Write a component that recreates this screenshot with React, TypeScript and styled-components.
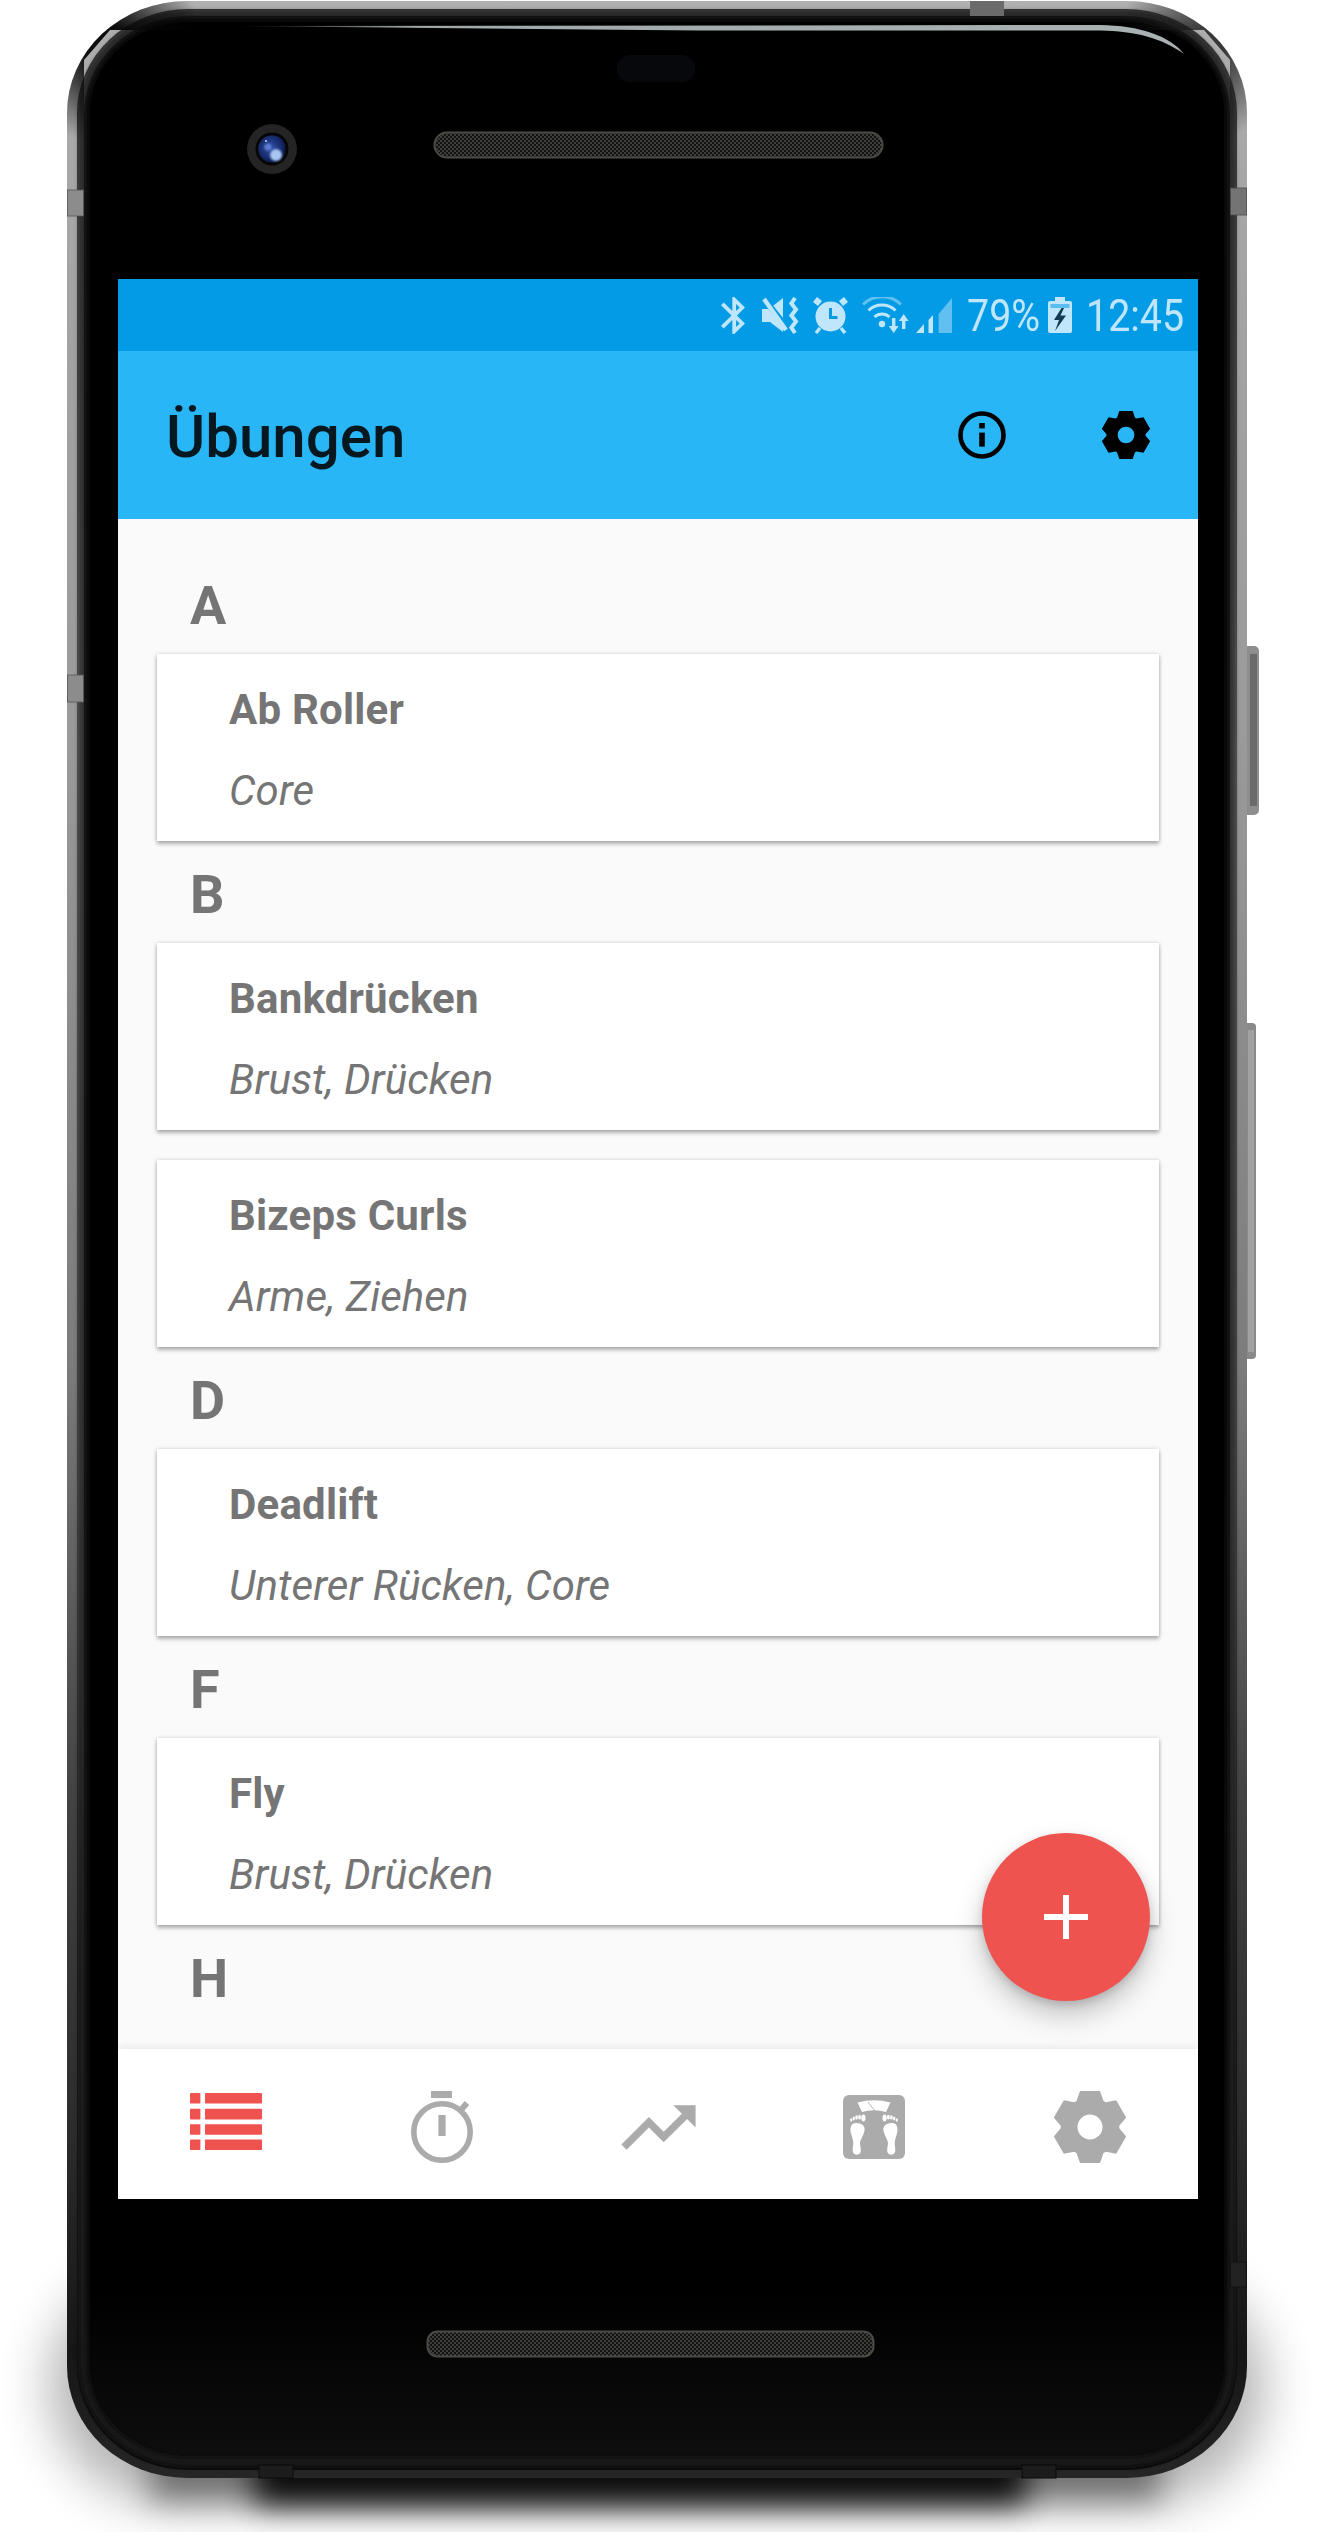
import React from 'react'
import styled, { createGlobalStyle } from 'styled-components'

const sections = [
  { letter: 'A', items: [{ name: 'Ab Roller', muscles: 'Core' }] },
  {
    letter: 'B',
    items: [
      { name: 'Bankdrücken', muscles: 'Brust, Drücken' },
      { name: 'Bizeps Curls', muscles: 'Arme, Ziehen' },
    ],
  },
  { letter: 'D', items: [{ name: 'Deadlift', muscles: 'Unterer Rücken, Core' }] },
  { letter: 'F', items: [{ name: 'Fly', muscles: 'Brust, Drücken' }] },
  { letter: 'H', items: [] },
]

// six flat teeth, one pointing straight up
const gearPath = (c: number, tip: number, root: number, tipW: number, baseW: number, hole: number) => {
  const pts: string[] = []
  for (let i = 0; i < 6; i++) {
    const a = (i * Math.PI) / 3
    const pt = (u: number, v: number) => {
      const x = c + u * Math.cos(a) + v * Math.sin(a)
      const y = c + u * Math.sin(a) - v * Math.cos(a)
      return `${x.toFixed(2)} ${y.toFixed(2)}`
    }
    pts.push(pt(-baseW, root), pt(-tipW, tip), pt(tipW, tip), pt(baseW, root))
  }
  return (
    `M${pts.join('L')}Z` +
    `M${c - hole} ${c}a${hole} ${hole} 0 1 0 ${hole * 2} 0a${hole} ${hole} 0 1 0 ${-hole * 2} 0Z`
  )
}

const GlobalStyle = createGlobalStyle`
  html, body {
    margin: 0;
    padding: 0;
    background: #fff;
  }
  * {
    box-sizing: border-box;
  }
`

const Stage = styled.div`
  width: 1330px;
  height: 2532px;
  padding-left: 67px;
  overflow: hidden;
  background: #fff;
  font-family: Roboto, 'Liberation Sans', sans-serif;
`

const Phone = styled.div`
  position: relative;
  width: 1180px;
  height: 2478px;
  padding: 279px 49px 279px 51px;
`

const Shell = styled.svg`
  position: absolute;
  left: 0;
  top: 0;
  overflow: visible;
`

const Screen = styled.div`
  position: relative;
  height: 1920px;
  display: flex;
  flex-direction: column;
  overflow: hidden;
  background: #fafafa;
`

const StatusBar = styled.div`
  flex: 0 0 72px;
  display: flex;
  align-items: center;
  justify-content: flex-end;
  padding: 0 17px 0 0;
  background: #039be5;
  color: #bfe6fb;
`

const StatusGlyph = styled.svg<{ $gap?: number }>`
  display: block;
  margin-left: ${(p) => p.$gap ?? 0}px;
  fill: #bfe6fb;
`

const StatusText = styled.span<{ $w: number; $gap: number }>`
  display: block;
  width: ${(p) => p.$w}px;
  margin-left: ${(p) => p.$gap}px;
  padding-top: 2px;
  font-size: 45px;
  line-height: 70px;
  white-space: nowrap;
  transform: scaleX(0.875);
  transform-origin: left center;
`

const AppBar = styled.header`
  flex: 0 0 168px;
  display: flex;
  align-items: center;
  padding: 0 48px;
  background: #29b6f6;
`

const Title = styled.h1`
  flex: 1;
  margin: 0;
  padding-top: 2px;
  font-size: 60px;
  font-weight: 500;
  color: rgba(0, 0, 0, 0.87);
`

const Actions = styled.div`
  display: flex;
  gap: 96px;
`

const Content = styled.main`
  flex: 1;
  min-height: 0;
  padding-top: 33px;
  overflow: hidden;
`

const SectionLetter = styled.div`
  height: 102px;
  padding: 24px 0 0 72px;
  font-size: 54px;
  line-height: 60px;
  font-weight: 700;
  color: #757575;
`

const Card = styled.article`
  height: 187px;
  margin: 0 39px 30px;
  padding: 31px 0 0 72px;
  background: #fff;
  box-shadow: 0 3px 4px rgba(0, 0, 0, 0.28), 0 0 4px rgba(0, 0, 0, 0.16);
  &:last-child {
    margin-bottom: 0;
  }
`

const CardName = styled.div`
  font-size: 42px;
  line-height: 50px;
  font-weight: 700;
  letter-spacing: 0.2px;
  color: #757575;
`

const CardMuscles = styled.div`
  margin-top: 31px;
  font-size: 42px;
  line-height: 50px;
  font-style: italic;
  letter-spacing: 0.1px;
  color: #757575;
`

const Fab = styled.button`
  position: absolute;
  right: 48px;
  bottom: 198px;
  width: 168px;
  height: 168px;
  display: flex;
  align-items: center;
  justify-content: center;
  padding: 0;
  border: 0;
  border-radius: 50%;
  background: #ef5350;
  box-shadow: 0 14px 28px rgba(0, 0, 0, 0.22), 0 4px 8px rgba(0, 0, 0, 0.14);
`

const BottomNav = styled.nav`
  position: relative;
  flex: 0 0 150px;
  display: flex;
  background: #fff;
  box-shadow: 0 -2px 8px rgba(0, 0, 0, 0.07);
`

const NavItem = styled.div<{ $raised?: boolean }>`
  flex: 1;
  display: flex;
  align-items: center;
  justify-content: center;
  padding: ${(p) => (p.$raised ? '0 0 6px' : '6px 0 0')};
`

const Gear = ({ size, color }: { size: number; color: string }) => (
  <svg width={size} height={size} viewBox="0 0 72 72">
    <path fillRule="evenodd" fill={color} d={gearPath(36, 36, 26, 10, 13.5, 12.5)} />
  </svg>
)

const InfoIcon = () => (
  <svg width="48" height="48" viewBox="0 0 48 48">
    <circle cx="24" cy="24" r="21.5" fill="none" stroke="#000" strokeWidth="4.6" />
    <rect x="21.2" y="12" width="5.6" height="5.4" />
    <rect x="21.2" y="21.6" width="5.6" height="14" />
  </svg>
)

const ListIcon = () => (
  <svg width="72" height="57" viewBox="0 0 72 57" fill="#ef5350">
    {[0, 15.8, 31.2, 46.4].map((y) => (
      <g key={y}>
        <rect x="0" y={y} width="10.4" height="10.6" rx="0.8" />
        <rect x="15" y={y} width="57" height="10.6" rx="0.8" />
      </g>
    ))}
  </svg>
)

const StopwatchIcon = () => (
  <svg width="62" height="72" viewBox="0 0 62 72">
    <rect x="20" y="0" width="21" height="7" fill="#ababab" />
    <circle cx="31" cy="41" r="28.2" fill="none" stroke="#ababab" strokeWidth="5.6" />
    <rect x="27.4" y="24" width="7.2" height="21" fill="#ababab" />
    <path d="M49 20l7-8" stroke="#ababab" strokeWidth="6" />
  </svg>
)

const TrendingIcon = () => (
  <svg width="89" height="89" viewBox="0 0 24 24" fill="#ababab">
    <path d="M16 6l2.29 2.29-4.88 4.88-4-4L2 16.59 3.41 18l6-6 4 4 6.3-6.29L22 12V6z" />
  </svg>
)

const foot =
  'M13 28C8 28 6.5 33 8 38.5C9.4 43 10.6 46 10.2 50C9.8 53 9.4 55 10 57C11 60.5 16.5 60.5 17.6 57C18.4 54 17 51 17 48C17.2 44.5 21 40 21.6 35C22 31 19 28 13 28Z'

const ScaleIcon = () => (
  <svg width="62" height="64" viewBox="0 0 62 64">
    <rect width="62" height="64" rx="6" fill="#ababab" />
    <path d="M14.5 7.5Q31 3 47.5 7.5L43 17Q31 13.6 19 17Z" fill="#fff" />
    <path d="M25 7l7 9" stroke="#ababab" strokeWidth="0.9" />
    <g fill="#fff">
      <path d={foot} />
      <path d={foot} transform="translate(62 0) scale(-1 1)" />
      {[
        [8.2, 25, 1.1, 1.8],
        [10.8, 23.4, 1.2, 2],
        [13.6, 22.4, 1.3, 2.2],
        [16.6, 22.2, 1.4, 2.4],
        [20.4, 23, 2.1, 3.4],
        [53.8, 25, 1.1, 1.8],
        [51.2, 23.4, 1.2, 2],
        [48.4, 22.4, 1.3, 2.2],
        [45.4, 22.2, 1.4, 2.4],
        [41.6, 23, 2.1, 3.4],
      ].map(([cx, cy, rx, ry]) => (
        <ellipse key={cx} cx={cx} cy={cy} rx={rx} ry={ry} />
      ))}
    </g>
  </svg>
)

const PlusIcon = () => (
  <svg width="44" height="44" viewBox="0 0 44 44" fill="#fff">
    <rect x="19" y="0" width="6" height="44" />
    <rect x="0" y="19" width="44" height="6" />
  </svg>
)

const StatusIcons = () => (
  <>
    <StatusGlyph width="24" height="37" viewBox="5 2 12.71 20" preserveAspectRatio="none">
      <path d="M17.71 7.71L12 2h-1v7.59L6.41 5 5 6.41 10.59 12 5 17.59 6.41 19 11 14.41V22h1l5.71-5.71-4.3-4.29 4.3-4.29zM13 5.83l1.88 1.88L13 9.59V5.83zm1.88 10.46L13 18.17v-3.76l1.88 1.88z" />
    </StatusGlyph>
    <StatusGlyph $gap={17} width="37" height="37" viewBox="0 0 37 37">
      <path d="M0 12H7L21 1V35L8 25H0Z" />
      <path d="M3 3L26 32" stroke="#039be5" strokeWidth="6" />
      <path d="M2 2L24 33" stroke="#bfe6fb" strokeWidth="4.4" />
      <path
        d="M33 1l-3.6 5.5 4.6 6-4.6 6 4.6 6-4.6 6 3.6 5.5"
        fill="none"
        stroke="#bfe6fb"
        strokeWidth="4"
      />
    </StatusGlyph>
    <StatusGlyph $gap={14} width="35" height="37" viewBox="0 0 35 37">
      <circle cx="17.5" cy="19.5" r="15" />
      <path d="M4 0L0 5l5 4 4-5zM31 0l4 5-5 4-4-5z" />
      <path d="M7 31l-4 5M28 31l4 5" stroke="#bfe6fb" strokeWidth="3.4" />
      <path d="M17.5 11v9.5h7" fill="none" stroke="#039be5" strokeWidth="3" />
    </StatusGlyph>
    <StatusGlyph $gap={14} width="48" height="37" viewBox="0 0 48 37">
      <circle cx="20" cy="27" r="3.2" />
      <g fill="none" stroke="#bfe6fb" strokeWidth="3">
        <path d="M12.5 20a11 11 0 0 1 15 0" />
        <path d="M6.5 13.5a19.5 19.5 0 0 1 27 0" />
        <path d="M1 7.5a27 27 0 0 1 38 0" opacity="0.5" />
      </g>
      <path d="M30 21h3.4v8h3.2L31.7 36l-4.9-7H30zM40 32V24h-3.2l4.9-7 4.9 7h-3.2v8z" />
    </StatusGlyph>
    <StatusGlyph $gap={6} width="36" height="37" viewBox="0 0 36 37">
      <path d="M0 36L8 27V36Z" />
      <path d="M12.5 23L17 18V36H12.5Z" />
      <path d="M22.6 17L36 1V36H22.6Z" opacity="0.5" />
    </StatusGlyph>
    <StatusText $w={70} $gap={15}>
      79%
    </StatusText>
    <StatusGlyph $gap={11} width="24" height="36" viewBox="0 0 24 36">
      <path d="M7 0H17V4H22Q24 4 24 6V34Q24 36 22 36H2Q0 36 0 34V6Q0 4 2 4H7Z" />
      <rect x="2.5" y="7" width="19" height="4" fill="#039be5" opacity="0.55" />
      <path d="M13.5 11L6 23H11L7 34L18 18.5H12.5L16 11Z" fill="#123c52" />
    </StatusGlyph>
    <StatusText $w={95} $gap={14}>
      12:45
    </StatusText>
  </>
)

const DeviceShell = () => (
  <Shell width="1180" height="2478" viewBox="67 0 1180 2478">
    <defs>
      <linearGradient id="band" x1="0" y1="0" x2="0" y2="1">
        <stop offset="0" stopColor="#b0b0b0" />
        <stop offset="0.08" stopColor="#a6a6a6" />
        <stop offset="0.3" stopColor="#9a9a9a" />
        <stop offset="0.55" stopColor="#7c7c7c" />
        <stop offset="0.72" stopColor="#444" />
        <stop offset="0.86" stopColor="#2c2c2c" />
        <stop offset="0.95" stopColor="#161616" />
        <stop offset="1" stopColor="#262626" />
      </linearGradient>
      <linearGradient id="innerBand" x1="0" y1="0" x2="0" y2="1">
        <stop offset="0" stopColor="#3a3a3a" />
        <stop offset="0.3" stopColor="#555" />
        <stop offset="0.6" stopColor="#444" />
        <stop offset="0.8" stopColor="#1c1c1c" />
        <stop offset="1" stopColor="#0c0c0c" />
      </linearGradient>
      <linearGradient id="face" x1="0" y1="0" x2="0" y2="1">
        <stop offset="0" stopColor="#000" />
        <stop offset="0.93" stopColor="#000" />
        <stop offset="1" stopColor="#0e0e0e" />
      </linearGradient>
      <linearGradient id="glare" x1="0" y1="0" x2="1" y2="0">
        <stop offset="0" stopColor="#9fa9aa" stopOpacity="0" />
        <stop offset="0.2" stopColor="#9fa9aa" />
        <stop offset="1" stopColor="#aab2b4" />
      </linearGradient>
      <radialGradient id="cornerL" gradientUnits="userSpaceOnUse" cx="110" cy="50" r="95">
        <stop offset="0.25" stopColor="#060606" stopOpacity="0.95" />
        <stop offset="1" stopColor="#060606" stopOpacity="0" />
      </radialGradient>
      <radialGradient id="cornerR" gradientUnits="userSpaceOnUse" cx="1204" cy="50" r="90">
        <stop offset="0.2" stopColor="#181818" stopOpacity="0.8" />
        <stop offset="1" stopColor="#181818" stopOpacity="0" />
      </radialGradient>
      <radialGradient id="lens" cx="0.45" cy="0.45" r="0.6">
        <stop offset="0" stopColor="#2f4fa8" />
        <stop offset="0.7" stopColor="#16296a" />
        <stop offset="1" stopColor="#070d24" />
      </radialGradient>
      <pattern id="mesh" width="4" height="4" patternUnits="userSpaceOnUse">
        <rect width="4" height="4" fill="#121212" />
        <rect x="0" y="0" width="2" height="2" fill="#3e3e3a" />
        <rect x="2" y="2" width="2" height="2" fill="#3e3e3a" />
      </pattern>
      <clipPath id="bodyClip">
        <rect x="67" y="1" width="1180" height="2477" rx="120" ry="112" />
      </clipPath>
      <filter id="blurBig" x="-20%" y="-60%" width="140%" height="220%">
        <feGaussianBlur stdDeviation="26" />
      </filter>
      <filter id="blurMid" x="-20%" y="-60%" width="140%" height="220%">
        <feGaussianBlur stdDeviation="15" />
      </filter>
      <filter id="blurSmall" x="-50%" y="-50%" width="200%" height="200%">
        <feGaussianBlur stdDeviation="1.2" />
      </filter>
      <filter id="blurEdge" x="-5%" y="-5%" width="110%" height="110%">
        <feGaussianBlur stdDeviation="3" />
      </filter>
    </defs>

    {/* shadow under the phone */}
    <rect x="50" y="2270" width="1214" height="232" rx="120" fill="#000" opacity="0.3" filter="url(#blurBig)" />
    <rect x="150" y="2440" width="1010" height="62" fill="#000" opacity="0.4" filter="url(#blurMid)" />
    <rect x="255" y="2420" width="770" height="84" fill="#000" opacity="0.9" filter="url(#blurMid)" />

    {/* side buttons */}
    <rect x="1240" y="646" width="19" height="169" rx="5" fill="#8e8e8e" />
    <rect x="1250" y="654" width="7" height="152" fill="#6a6a6a" />
    <rect x="1240" y="1023" width="16" height="336" rx="4" fill="#8a8a8a" />
    <rect x="1248" y="1030" width="6" height="322" fill="#a2a2a2" />

    {/* body */}
    <rect x="67" y="1" width="1180" height="2477" rx="120" ry="112" fill="url(#band)" />
    <rect x="77" y="9" width="1160" height="2461" rx="111" ry="104" fill="url(#innerBand)" />
    <rect x="84" y="16" width="1146" height="2446" rx="104" ry="98" fill="url(#face)" />
    <rect x="84" y="16" width="1146" height="2446" rx="104" ry="98" fill="none" stroke="#1c1c1c" strokeWidth="6" filter="url(#blurEdge)" />

    {/* dark corners of the frame */}
    <g clipPath="url(#bodyClip)">
      <path d="M67 170V0H240V30H110L84 60V170Z" fill="url(#cornerL)" />
      <path d="M1247 170V0H1074V30H1204L1230 60V170Z" fill="url(#cornerR)" />
    </g>

    {/* antenna bands */}
    <rect x="67.5" y="190" width="16" height="26" fill="#8c8c8c" stroke="#555" strokeWidth="0.8" />
    <rect x="67.5" y="675" width="16" height="27" fill="#8c8c8c" stroke="#555" strokeWidth="0.8" />
    <rect x="1230.5" y="188" width="16" height="27" fill="#747474" stroke="#4c4c4c" strokeWidth="0.8" />
    <rect x="1230.5" y="2262" width="16" height="25" fill="#222" stroke="#111" strokeWidth="0.8" />
    <rect x="970" y="1" width="34" height="15" fill="#6a6a6a" />
    <rect x="259" y="2465" width="34" height="13" fill="#1c1c1c" stroke="#0a0a0a" strokeWidth="1" />
    <rect x="1022" y="2465" width="34" height="13" fill="#1c1c1c" stroke="#0a0a0a" strokeWidth="1" />

    {/* glass reflection */}
    <path d="M225 26L1100 25C1140 25.5 1170 36 1184 54C1162 38 1135 31 1100 30.5L700 30.5Z" fill="url(#glare)" />

    {/* earpiece, sensor, camera */}
    <rect x="617" y="55" width="78" height="27" rx="13" fill="#07080b" />
    <rect x="434.5" y="132.5" width="448" height="25" rx="12.5" fill="url(#mesh)" stroke="#4a4a46" strokeWidth="2" />
    <rect x="427.5" y="2331.5" width="446" height="25" rx="10" fill="url(#mesh)" stroke="#4a4a46" strokeWidth="2" />

    <circle cx="272" cy="149" r="25" fill="#242424" />
    <circle cx="272" cy="149" r="16.5" fill="#060606" />
    <circle cx="272" cy="149" r="13.8" fill="url(#lens)" />
    <circle cx="276" cy="155" r="6" fill="#a8c6f2" filter="url(#blurSmall)" />
    <circle cx="268" cy="147" r="3.6" fill="#5f80cf" filter="url(#blurSmall)" />
    <circle cx="266" cy="141" r="1" fill="#c6d6f6" />
  </Shell>
)

export default function App() {
  return (
    <Stage>
      <GlobalStyle />
      <Phone>
        <DeviceShell />
        <Screen>
          <StatusBar>
            <StatusIcons />
          </StatusBar>
          <AppBar>
            <Title>Übungen</Title>
            <Actions>
              <InfoIcon />
              <Gear size={48} color="#000" />
            </Actions>
          </AppBar>
          <Content>
            {sections.map((section) => (
              <section key={section.letter}>
                <SectionLetter>{section.letter}</SectionLetter>
                {section.items.map((item) => (
                  <Card key={item.name}>
                    <CardName>{item.name}</CardName>
                    <CardMuscles>{item.muscles}</CardMuscles>
                  </Card>
                ))}
              </section>
            ))}
          </Content>
          <BottomNav>
            <NavItem $raised>
              <ListIcon />
            </NavItem>
            <NavItem>
              <StopwatchIcon />
            </NavItem>
            <NavItem>
              <TrendingIcon />
            </NavItem>
            <NavItem>
              <ScaleIcon />
            </NavItem>
            <NavItem>
              <Gear size={72} color="#ababab" />
            </NavItem>
          </BottomNav>
          <Fab type="button" aria-label="Übung hinzufügen">
            <PlusIcon />
          </Fab>
        </Screen>
      </Phone>
    </Stage>
  )
}
